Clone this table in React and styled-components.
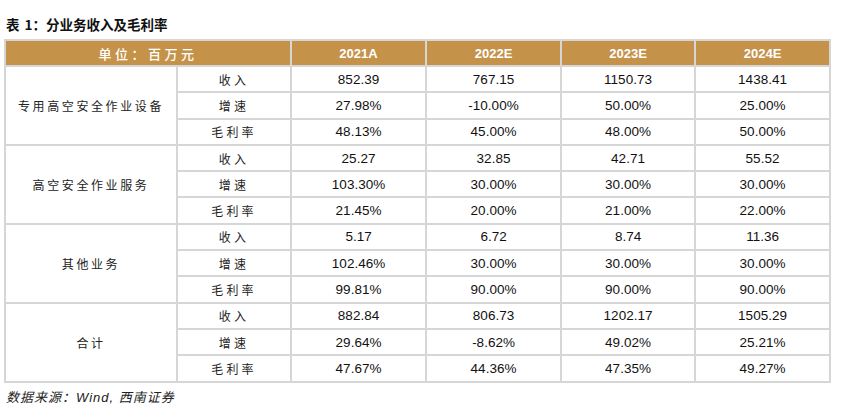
import styled, { createGlobalStyle } from 'styled-components';

const GlobalStyle = createGlobalStyle`
  html, body {
    margin: 0;
    padding: 0;
    background: #fff;
  }
`;

const Page = styled.div`
  width: 842px;
  height: 410px;
  padding: 14px 0 0 4px;
  box-sizing: border-box;
  font-family: "Liberation Sans", "Noto Sans CJK SC", sans-serif;
  color: #111;
`;

const Title = styled.div`
  height: 20px;
  line-height: 20px;
  padding-left: 2px;
  margin-bottom: 5px;
  font-family: "Noto Sans CJK SC", sans-serif;
  font-size: 13.5px;
  font-weight: 700;
  color: #111;
  word-spacing: 2px;
`;

const Table = styled.table`
  width: 825px;
  table-layout: fixed;
  border-collapse: collapse;
  border: 2px solid #d6d6d6;
  border-bottom: 2px solid #d2a263;
`;

const Col = styled.col`
  width: ${p => p.$w}px;
`;

const HeadCell = styled.th`
  height: 24px;
  padding: 0;
  background: #c5924a;
  color: #fff;
  border: 2px solid #d6d6d6;
  font-size: 13px;
  text-align: center;
  font-family: ${p => (p.$cjk ? '"Noto Sans CJK SC", sans-serif' : '"Liberation Sans", sans-serif')};
  letter-spacing: ${p => (p.$cjk ? '3.5px' : '0')};
  font-weight: ${p => (p.$cjk ? 500 : 700)};
`;

const GroupCell = styled.td`
  padding: 0;
  border: 2px solid #d6d6d6;
  text-align: center;
  font-family: "Noto Sans CJK SC", sans-serif;
  font-size: 12px;
  letter-spacing: 2.6px;
  color: #222;
`;

const LabelCell = styled(GroupCell)`
  letter-spacing: 3.2px;
`;

const ValueCell = styled.td`
  height: 24.3px;
  padding: 0;
  border: 2px solid #d6d6d6;
  text-align: center;
  font-family: "Liberation Sans", sans-serif;
  font-size: 13.5px;
  color: #111;
`;

const Source = styled.div`
  margin-top: 6px;
  padding-left: 2px;
  height: 18px;
  line-height: 18px;
  font-family: "Liberation Sans", "Noto Sans CJK SC", sans-serif;
  font-style: italic;
  font-size: 13px;
  color: #222;
  letter-spacing: 1px;
`;

const colWidths = [172, 114, 135, 135, 134, 135];
const years = ['2021A', '2022E', '2023E', '2024E'];
const labels = ['收入', '增速', '毛利率'];

const groups = [
  {
    name: '专用高空安全作业设备',
    rows: [
      ['852.39', '767.15', '1150.73', '1438.41'],
      ['27.98%', '-10.00%', '50.00%', '25.00%'],
      ['48.13%', '45.00%', '48.00%', '50.00%'],
    ],
  },
  {
    name: '高空安全作业服务',
    rows: [
      ['25.27', '32.85', '42.71', '55.52'],
      ['103.30%', '30.00%', '30.00%', '30.00%'],
      ['21.45%', '20.00%', '21.00%', '22.00%'],
    ],
  },
  {
    name: '其他业务',
    rows: [
      ['5.17', '6.72', '8.74', '11.36'],
      ['102.46%', '30.00%', '30.00%', '30.00%'],
      ['99.81%', '90.00%', '90.00%', '90.00%'],
    ],
  },
  {
    name: '合计',
    rows: [
      ['882.84', '806.73', '1202.17', '1505.29'],
      ['29.64%', '-8.62%', '49.02%', '25.21%'],
      ['47.67%', '44.36%', '47.35%', '49.27%'],
    ],
  },
];

export default function App() {
  return (
    <>
      <GlobalStyle />
      <Page>
        <Title>表 1：分业务收入及毛利率</Title>
        <Table>
          <colgroup>
            {colWidths.map((w, i) => (
              <Col key={i} $w={w} />
            ))}
          </colgroup>
          <thead>
            <tr>
              <HeadCell colSpan={2} $cjk>单位：百万元</HeadCell>
              {years.map(y => (
                <HeadCell key={y}>{y}</HeadCell>
              ))}
            </tr>
          </thead>
          <tbody>
            {groups.map(g =>
              g.rows.map((vals, i) => (
                <tr key={g.name + i}>
                  {i === 0 && <GroupCell rowSpan={3}>{g.name}</GroupCell>}
                  <LabelCell>{labels[i]}</LabelCell>
                  {vals.map((v, j) => (
                    <ValueCell key={j}>{v}</ValueCell>
                  ))}
                </tr>
              ))
            )}
          </tbody>
        </Table>
        <Source>数据来源：Wind, 西南证券</Source>
      </Page>
    </>
  );
}
